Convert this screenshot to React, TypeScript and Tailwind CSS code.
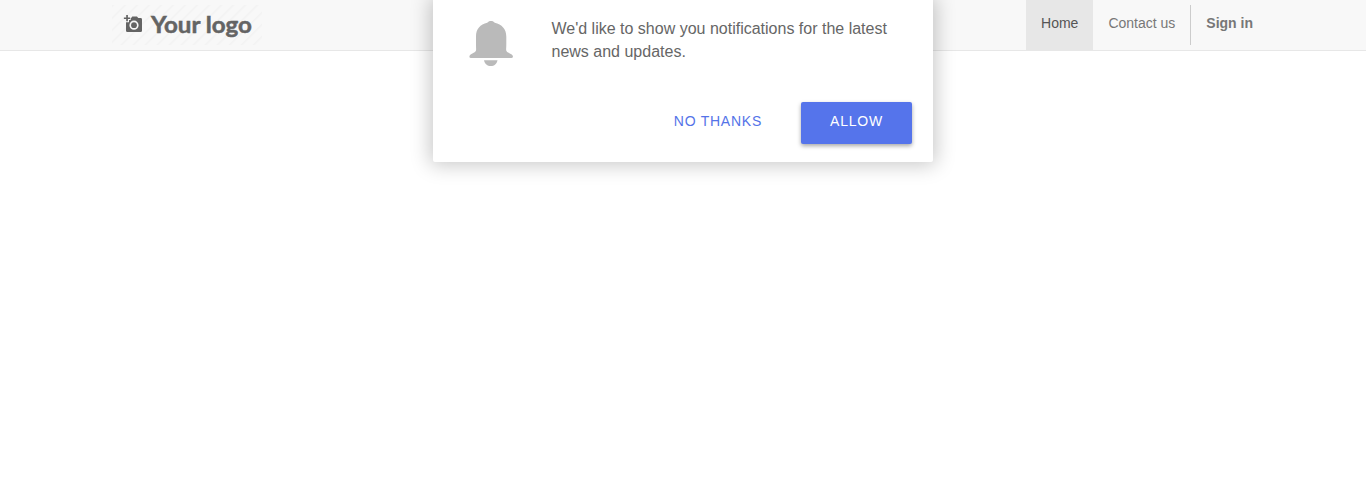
function Logo() {
  return (
    <svg width="150" height="40" viewBox="0 0 150 40" role="img" aria-label="Your logo">
      <defs>
        <pattern id="stripes" width="14" height="8.5" patternUnits="userSpaceOnUse" patternTransform="rotate(-45)">
          <rect width="14" height="1.6" fill="#f3f3f3" />
        </pattern>
      </defs>
      <rect width="150" height="40" fill="url(#stripes)" />
      <g fill="#646464">
        <path fillRule="evenodd" d="M18.7 13.1L19.4 12.7L20.3 11.5H24.9L26.3 13.1H28.6Q30 13.1 30 14.4V25.7Q30 27 28.6 27H15.4Q14 27 14 25.7V17.3H17V15H18.7ZM22 15.6A4.6 4.6 0 1 0 22 24.8A4.6 4.6 0 1 0 22 15.6Z" />
        <circle cx="22" cy="20.2" r="2.9" />
        <path d="M14.2 10.1H15.9V12.4H18.1V14.1H15.9V16.3H14.2V14.1H11.9V12.4H14.2Z" />
        <text x="39" y="27.6" fontSize="23" fontWeight="700" stroke="#646464" strokeWidth="0.5" textLength="101" lengthAdjust="spacingAndGlyphs" className="font-['Lato',sans-serif]">Your logo</text>
      </g>
    </svg>
  );
}

function Bell() {
  return (
    <svg width="44" height="46" viewBox="0 0 44 46" fill="#bababa" aria-hidden="true">
      <path d="M18.3 1.8C19.2.6 20.3 0 22 0S24.8.6 25.7 1.8C32.8 3.3 37.3 8.1 37.3 15.4V23.8C37.3 28.3 36.6 29.6 38.2 30.9L42.7 33.6C43.8 34.3 44.2 35.3 43.8 36.2Q43.5 37 42.4 37H1.9Q.8 37 .5 36.2C.2 35.3.6 34.3 1.6 33.6L6 30.9C7.6 29.6 7 28.3 7 23.8V15.4C7 8.1 11.2 3.3 18.3 1.8Z" />
      <path d="M15 39.2H28.5C27.8 43.1 25.2 45 21.8 45S15.7 43.1 15 39.2Z" />
    </svg>
  );
}

export default function App() {
  return (
    <div className="relative min-h-[497px] bg-white font-['Liberation_Sans',Arial,sans-serif] text-sm leading-5">
      <header className="flex h-[51px] items-start justify-between border-b border-[#e7e7e7] bg-[#f8f8f8] pr-[98px] pl-28">
        <a href="#" className="mt-[5px] block">
          <Logo />
        </a>
        <nav className="flex h-[50px] items-start text-[#777777]">
          <a href="#" className="h-full bg-[#e7e7e7] px-[15px] pt-[13px] text-[#555555]">Home</a>
          <a href="#" className="px-[15px] pt-[13px]">Contact us</a>
          <a href="#" className="mt-[5px] h-10 border-l border-[#cccccc] px-[15px] pt-2 font-bold">Sign in</a>
        </nav>
      </header>
      <section
        role="dialog"
        className="absolute top-0 left-[433px] flex h-[162px] w-[500px] flex-col justify-between rounded-b-[2px] bg-white pb-[18px] shadow-[0_0_20px_3px_rgba(0,0,0,0.22)]"
      >
        <div className="flex pl-9">
          <div className="mt-[21px] shrink-0">
            <Bell />
          </div>
          <p className="mt-[17px] ml-[38.5px] w-[350px] text-base leading-[23px] text-[#666666]">
            We'd like to show you notifications for the latest news and updates.
          </p>
        </div>
        <div className="flex justify-end pr-[21px] tracking-[0.75px]">
          <button className="mr-[11px] h-[42px] px-7 pb-[5px] text-[#5473e8]">NO THANKS</button>
          <button className="h-[42px] w-[111px] rounded-[2px] bg-[#5574eb] pb-[5px] text-white shadow-[0_2px_4px_rgba(0,0,0,0.35)]">ALLOW</button>
        </div>
      </section>
    </div>
  );
}
